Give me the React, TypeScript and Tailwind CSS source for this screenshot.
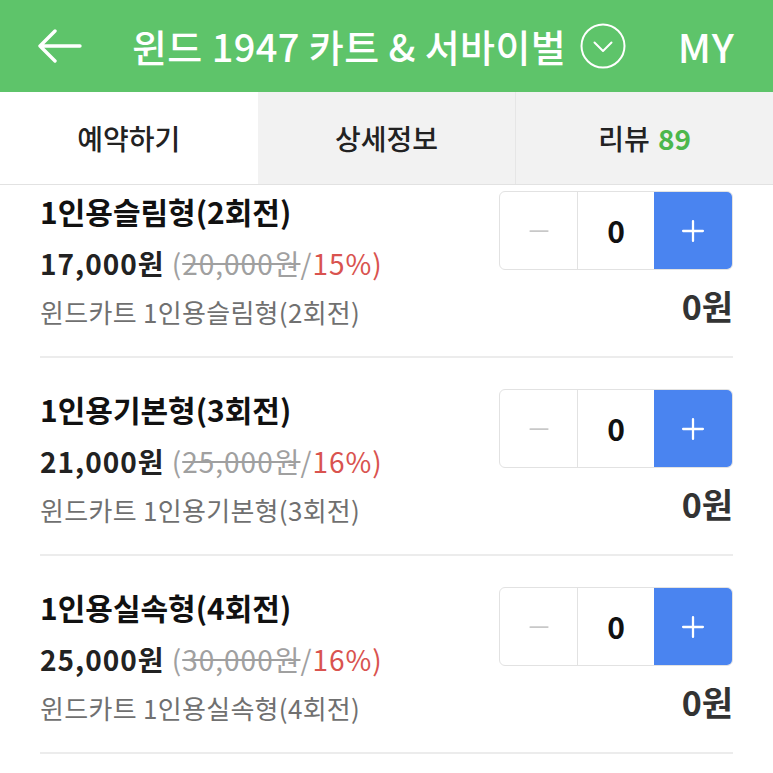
import { Minus, Plus } from "lucide-react";

type Product = {
  name: string;
  price: string;
  original: string;
  discount: string;
  desc: string;
};

const PRODUCTS: Product[] = [
  {
    name: "1인용슬림형(2회전)",
    price: "17,000원",
    original: "20,000원",
    discount: "15%",
    desc: "윈드카트 1인용슬림형(2회전)",
  },
  {
    name: "1인용기본형(3회전)",
    price: "21,000원",
    original: "25,000원",
    discount: "16%",
    desc: "윈드카트 1인용기본형(3회전)",
  },
  {
    name: "1인용실속형(4회전)",
    price: "25,000원",
    original: "30,000원",
    discount: "16%",
    desc: "윈드카트 1인용실속형(4회전)",
  },
];

const FONT = "font-['Noto_Sans_CJK_KR','Noto_Sans',sans-serif]";

const App = () => {
  return (
    <div className={`w-[773px] h-[773px] overflow-hidden bg-white ${FONT}`}>
      <header className="h-[92px] bg-[#5ec46a] flex items-center text-white">
        <button type="button" className="w-[120px] h-full flex items-center pl-[36px]">
          <svg width="46" height="34" viewBox="0 0 46 34" fill="none">
            <path
              d="M44 17H4M19 2L4 17l15 15"
              stroke="white"
              strokeWidth="3.4"
              strokeLinecap="round"
              strokeLinejoin="round"
            />
          </svg>
        </button>
        <div className="flex items-center gap-[14px] ml-[12px]">
          <h1 className="text-[38px] font-medium leading-none tracking-[0.4px]">
            윈드 1947 카트 &amp; 서바이벌
          </h1>
          <svg width="46" height="46" viewBox="0 0 46 46" fill="none">
            <circle cx="23" cy="23" r="21.5" stroke="white" strokeWidth="2" />
            <path
              d="M14.5 19.5L23 28l8.5-8.5"
              stroke="white"
              strokeWidth="2"
              strokeLinecap="round"
              strokeLinejoin="round"
            />
          </svg>
        </div>
        <span className="ml-auto mr-[38px] text-[40px] font-medium leading-none tracking-[1px]">
          MY
        </span>
      </header>

      <nav className="h-[93px] grid grid-cols-3 border-b border-[#e2e2e2]">
        <div className="bg-white flex items-center justify-center text-[28px] font-medium text-[#222]">
          예약하기
        </div>
        <div className="bg-[#f2f2f2] flex items-center justify-center text-[28px] font-medium text-[#222]">
          상세정보
        </div>
        <div className="bg-[#f2f2f2] border-l border-[#e6e6e6] flex items-center justify-center text-[28px] font-medium text-[#222] gap-[8px]">
          리뷰 <span className="text-[#4cb74c] font-bold">89</span>
        </div>
      </nav>

      <div className="h-[588px] overflow-hidden">
        <ul className="-mt-[25px] px-[40px]">
          {PRODUCTS.map((product) => (
            <li
              key={product.name}
              className="h-[198px] pt-[31px] border-b-[2px] border-[#ececec] flex justify-between"
            >
              <div className="min-w-0">
                <p className="text-[30px] font-bold text-[#111] leading-[40px]">
                  {product.name}
                </p>
                <p className="mt-[12px] text-[28px] leading-[40px] tracking-[1px] whitespace-nowrap">
                  <span className="font-bold text-[#222]">{product.price}</span>{" "}
                  <span className="text-[#a0a0a0]">
                    (<span className="line-through">{product.original}</span>/
                  </span>
                  <span className="text-[#d9534f]">{product.discount}</span>
                  <span className="text-[#d9534f]">)</span>
                </p>
                <p className="mt-[11px] text-[26px] leading-[36px] text-[#707070] tracking-[0.3px] whitespace-nowrap">
                  {product.desc}
                </p>
              </div>
              <div className="flex flex-col items-end">
                <div className="w-[234px] h-[79px] flex rounded-[6px] border border-[#e2e2e2] overflow-hidden">
                  <button
                    type="button"
                    className="w-[77px] flex items-center justify-center text-[#c8c8c8]"
                  >
                    <Minus size={30} strokeWidth={1.4} />
                  </button>
                  <div className="w-[77px] border-l border-[#e2e2e2] flex items-center justify-center text-[30px] font-bold text-[#111]">
                    0
                  </div>
                  <button
                    type="button"
                    className="flex-1 bg-[#4a84f0] flex items-center justify-center text-white"
                  >
                    <Plus size={34} strokeWidth={1.6} />
                  </button>
                </div>
                <p className="mt-[16px] text-[34px] font-bold text-[#333] leading-[40px]">
                  0원
                </p>
              </div>
            </li>
          ))}
        </ul>
      </div>
    </div>
  );
};

export default App;
